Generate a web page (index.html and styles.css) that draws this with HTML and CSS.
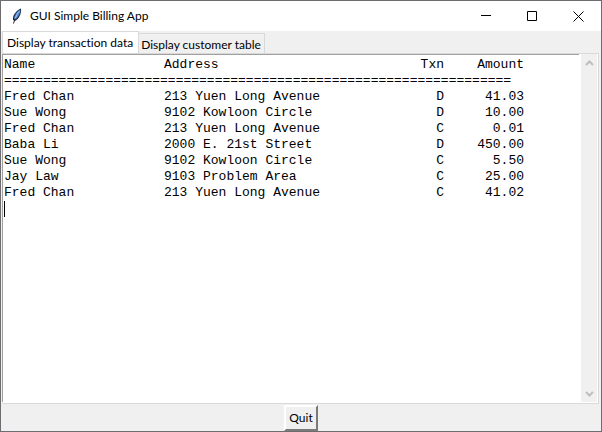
FILE: index.html
```html
<!DOCTYPE html>
<html lang="en">
<head>
    <meta charset="UTF-8">
    <meta name="viewport" content="width=device-width, initial-scale=1">
    <title>GUI Simple Billing App</title>
    <link rel="stylesheet" href="styles.css">
</head>
<body>
<div class="window">
    <header class="titlebar">
        <svg class="app-icon" width="16" height="16" viewBox="0 0 16 16">
            <path d="M12 0.500 C9 1.500 5 5 4 9.500 L4 12 L6 13 C10 11 12.500 6 12 0.500Z" fill="#1c2c48"/>
            <path d="M11.300 1.600 C8.500 3.200 5.500 6.500 5 10.800 L6.500 11.200 C9.500 9 11.500 5.500 11.300 1.600Z" fill="#4a86d0"/>
            <path d="M10.500 3 C9 5 7.500 7 6.500 10" fill="none" stroke="#a9cbf3" stroke-width="1"/>
            <path d="M6 11 L4.500 15.500" fill="none" stroke="#222" stroke-width="1"/>
        </svg>
        <h1 class="title">GUI Simple Billing App</h1>
        <div class="window-buttons">
            <button class="window-button" type="button" aria-label="Minimize">
                <svg width="11" height="11" viewBox="0 0 11 11"><path d="M0 4.500H10"/></svg>
            </button>
            <button class="window-button" type="button" aria-label="Maximize">
                <svg width="11" height="11" viewBox="0 0 11 11"><path d="M0.500 0.500H9.500V9.500H0.500Z"/></svg>
            </button>
            <button class="window-button" type="button" aria-label="Close">
                <svg width="11" height="11" viewBox="0 0 11 11"><path d="M0.500 0.500L10.500 10.500M10.500 0.500L0.500 10.500"/></svg>
            </button>
        </div>
    </header>

    <main class="notebook">
        <div class="tabs" role="tablist">
            <button class="tab active" type="button" role="tab" aria-selected="true">Display transaction data</button>
            <button class="tab" type="button" role="tab" aria-selected="false">Display customer table</button>
        </div>
        <div class="panel" role="tabpanel">
            <div class="text-area">
                <table class="transactions">
                    <thead>
                    <tr><th class="name">Name</th><th class="address">Address</th><th class="txn">Txn</th><th class="amount">Amount</th></tr>
                    </thead>
                    <tbody>
                    <tr><td colspan="4">=================================================================</td></tr>
                    <tr><td>Fred Chan</td><td>213 Yuen Long Avenue</td><td class="txn">D</td><td class="amount">41.03</td></tr>
                    <tr><td>Sue Wong</td><td>9102 Kowloon Circle</td><td class="txn">D</td><td class="amount">10.00</td></tr>
                    <tr><td>Fred Chan</td><td>213 Yuen Long Avenue</td><td class="txn">C</td><td class="amount">0.01</td></tr>
                    <tr><td>Baba Li</td><td>2000 E. 21st Street</td><td class="txn">D</td><td class="amount">450.00</td></tr>
                    <tr><td>Sue Wong</td><td>9102 Kowloon Circle</td><td class="txn">C</td><td class="amount">5.50</td></tr>
                    <tr><td>Jay Law</td><td>9103 Problem Area</td><td class="txn">C</td><td class="amount">25.00</td></tr>
                    <tr><td>Fred Chan</td><td>213 Yuen Long Avenue</td><td class="txn">C</td><td class="amount">41.02</td></tr>
                    </tbody>
                </table>
                <div class="caret"></div>
            </div>
            <div class="scrollbar">
                <button class="scroll-button" type="button" aria-label="Scroll up">
                    <svg width="9" height="6" viewBox="0 0 9 6"><path d="M1 5L4.500 1.500L8 5"/></svg>
                </button>
                <button class="scroll-button" type="button" aria-label="Scroll down">
                    <svg width="9" height="6" viewBox="0 0 9 6"><path d="M1 1L4.500 4.500L8 1"/></svg>
                </button>
            </div>
        </div>
    </main>

    <footer class="footer">
        <button class="quit" type="button">Quit</button>
    </footer>
</div>
</body>
</html>
```
FILE: styles.css
```css
* {
    box-sizing: border-box;
}

body {
    margin: 0;
    font-family: Lato, "Open Sans", sans-serif;
    font-size: 12px;
    font-variant-ligatures: none;
    color: #000;
}

button {
    margin: 0;
    padding: 0;
    border: 0;
    background: none;
    font: inherit;
    font-variant-ligatures: none;
    color: inherit;
}

.window {
    display: flex;
    flex-direction: column;
    min-height: 100vh;
    border: 1px solid #6e6c70;
    background: #f0f0f0;
}

/* title bar */
.titlebar {
    display: flex;
    align-items: center;
    height: 30px;
    padding-left: 8px;
    background: #fff;
}

.title {
    flex: 1;
    margin: 0 0 0 5px;
    font-size: 12px;
    font-weight: normal;
    line-height: 16px;
}

.window-buttons {
    display: flex;
}

.window-button {
    display: flex;
    align-items: center;
    justify-content: center;
    width: 46px;
    height: 28px;
}

.window-button svg {
    fill: none;
    stroke: #000;
}

/* notebook */
.notebook {
    flex: 1;
    display: flex;
    flex-direction: column;
    padding: 0 2px 0 1px;
}

.tabs {
    display: flex;
    align-items: flex-end;
}

.tab {
    height: 20px;
    padding: 1px 3px 0 2px;
    border: 1px solid #d9d9d9;
    border-width: 1px 1px 0 0;
    line-height: 20px;
}

.tab.active {
    height: 22px;
    padding: 0 5px 0 4px;
    border-left-width: 1px;
    background: #fff;
}

.panel {
    flex: 1;
    display: flex;
    padding: 0 1px 1px 0;
    border: 1px solid #d9d9d9;
    border-left: 0;
    background: #fff;
}

.text-area {
    flex: 1;
    margin-right: 2px;
    padding: 2px 0 0 1px;
    border: 0 solid #a0a0a0;
    border-width: 1px 0 0 1px;
    font-family: "Liberation Mono", monospace;
    font-size: 13px;
    line-height: 16px;
}

.transactions {
    width: 520px;
    table-layout: fixed;
    border-collapse: collapse;
}

.transactions th,
.transactions td {
    padding: 0;
    font-weight: normal;
    text-align: left;
    white-space: nowrap;
}

.transactions .name {
    width: 160px;
}

.transactions .txn {
    width: 120px;
    text-align: right;
}

.transactions .amount {
    width: 80px;
    text-align: right;
}

.caret {
    width: 1px;
    height: 16px;
    background: #000;
}

.scrollbar {
    display: flex;
    flex-direction: column;
    justify-content: space-between;
    width: 16px;
    background: #f0f0f0;
}

.scroll-button {
    display: flex;
    align-items: center;
    justify-content: center;
    height: 17px;
}

.scroll-button svg {
    fill: none;
    stroke: #bfbfbf;
    stroke-width: 2;
}

/* footer */
.footer {
    display: flex;
    justify-content: center;
    padding-top: 1px;
}

.quit {
    height: 26px;
    padding: 0 3px;
    border: 2px solid;
    border-color: #fff #7a7a7a #7a7a7a #fff;
    line-height: 20px;
}
```
